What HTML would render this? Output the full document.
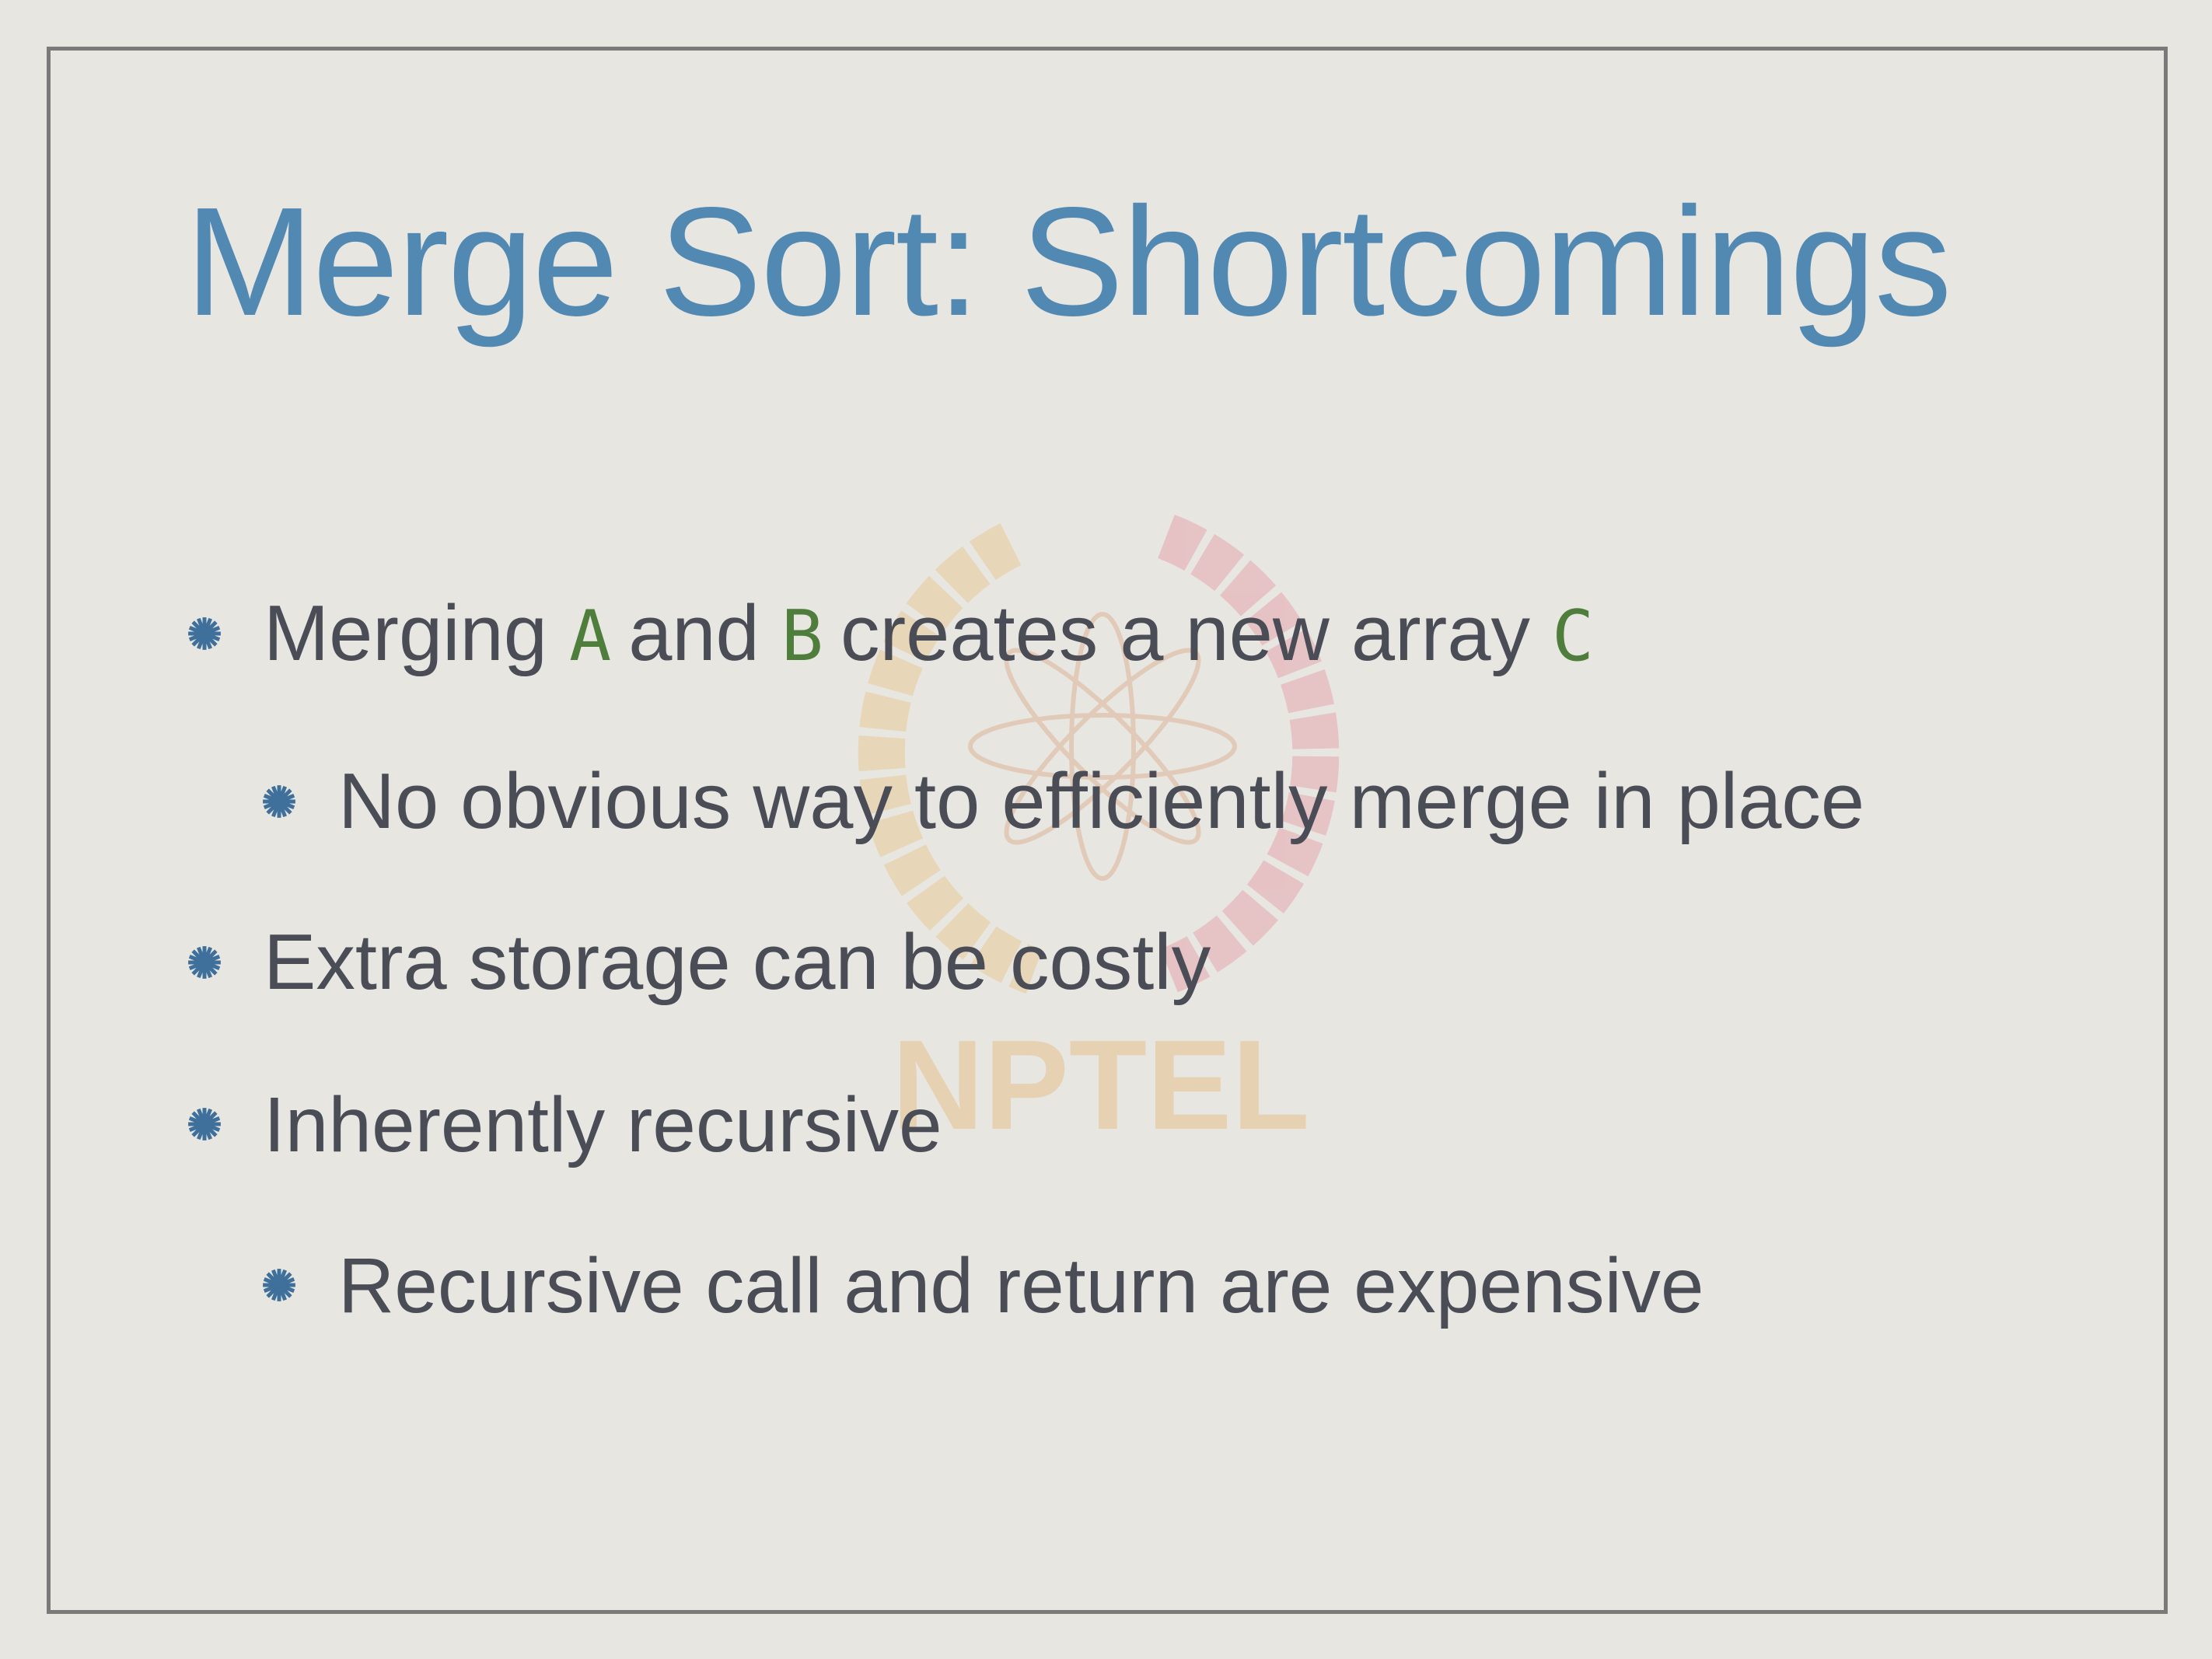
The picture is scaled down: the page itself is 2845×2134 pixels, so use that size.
<!DOCTYPE html>
<html><head><meta charset="utf-8"><style>
html,body{margin:0;padding:0;width:2845px;height:2134px;overflow:hidden}
body{background:#e7e6e1;position:relative;font-family:"Liberation Sans",Arial,sans-serif}
.border{position:absolute;left:60px;top:60px;width:2718px;height:2006px;border:5px solid #7a7a7a}
.t{position:absolute;white-space:nowrap;line-height:1}
.title{left:238px;top:238px;font-size:199px;color:#5289b3;letter-spacing:-1.7px}
.b{font-size:101px;color:#4a4d56}
.g{font-family:"DejaVu Sans Mono","Liberation Mono",monospace;color:#4e7d3c;font-size:90px;letter-spacing:-6px}
.g2{font-family:"DejaVu Sans Mono","Liberation Mono",monospace;color:#4e7d3c;font-size:90px}
svg.bul{position:absolute;width:44px;height:44px}
</style></head><body>
<div class="border"></div>
<svg style="position:absolute;left:0;top:0" width="2845" height="2134">
<g opacity="0.5" fill="none">
<path d="M1300 700 A300 300 0 0 0 1330 1250" stroke="#e8c890" stroke-width="60" stroke-dasharray="42 10"/>
<path d="M1500 690 A300 300 0 0 1 1500 1250" stroke="#e6a0a8" stroke-width="60" stroke-dasharray="42 10"/>
<g stroke="#dcb090" stroke-width="6">
<ellipse cx="1418" cy="960" rx="40" ry="170"/>
<ellipse cx="1418" cy="960" rx="40" ry="170" transform="rotate(45 1418 960)"/>
<ellipse cx="1418" cy="960" rx="40" ry="170" transform="rotate(90 1418 960)"/>
<ellipse cx="1418" cy="960" rx="40" ry="170" transform="rotate(135 1418 960)"/>
</g>
</g>
<text x="1147" y="1452" font-family="Liberation Sans" font-weight="bold" font-size="164" fill="#e6c9a0" opacity="0.7">NPTEL</text>
</svg>
<div class="t title">Merge Sort: Shortcomings</div>

<svg class="bul" style="left:241px;top:793px" viewBox="-20 -20 40 40"><g stroke="#3f6f9b" stroke-width="4.5"><line x1="0" y1="-19" x2="0" y2="19"/><line x1="-19" y1="0" x2="19" y2="0"/><line x1="-13.5" y1="-13.5" x2="13.5" y2="13.5"/><line x1="-13.5" y1="13.5" x2="13.5" y2="-13.5"/><line x1="-7" y1="-17.5" x2="7" y2="17.5"/><line x1="7" y1="-17.5" x2="-7" y2="17.5"/><line x1="-17.5" y1="-7" x2="17.5" y2="7"/><line x1="-17.5" y1="7" x2="17.5" y2="-7"/></g></svg>
<div class="t b" style="left:339px;top:765px">Merging <span class="g">A</span> and <span class="g">B</span> creates a new array <span class="g2">C</span></div>

<svg class="bul" style="left:337px;top:1009px" viewBox="-20 -20 40 40"><g stroke="#3f6f9b" stroke-width="4.5"><line x1="0" y1="-19" x2="0" y2="19"/><line x1="-19" y1="0" x2="19" y2="0"/><line x1="-13.5" y1="-13.5" x2="13.5" y2="13.5"/><line x1="-13.5" y1="13.5" x2="13.5" y2="-13.5"/><line x1="-7" y1="-17.5" x2="7" y2="17.5"/><line x1="7" y1="-17.5" x2="-7" y2="17.5"/><line x1="-17.5" y1="-7" x2="17.5" y2="7"/><line x1="-17.5" y1="7" x2="17.5" y2="-7"/></g></svg>
<div class="t b" style="left:435px;top:981px">No obvious way to efficiently merge in place</div>

<svg class="bul" style="left:241px;top:1216px" viewBox="-20 -20 40 40"><g stroke="#3f6f9b" stroke-width="4.5"><line x1="0" y1="-19" x2="0" y2="19"/><line x1="-19" y1="0" x2="19" y2="0"/><line x1="-13.5" y1="-13.5" x2="13.5" y2="13.5"/><line x1="-13.5" y1="13.5" x2="13.5" y2="-13.5"/><line x1="-7" y1="-17.5" x2="7" y2="17.5"/><line x1="7" y1="-17.5" x2="-7" y2="17.5"/><line x1="-17.5" y1="-7" x2="17.5" y2="7"/><line x1="-17.5" y1="7" x2="17.5" y2="-7"/></g></svg>
<div class="t b" style="left:339px;top:1188px">Extra storage can be costly</div>

<svg class="bul" style="left:241px;top:1424px" viewBox="-20 -20 40 40"><g stroke="#3f6f9b" stroke-width="4.5"><line x1="0" y1="-19" x2="0" y2="19"/><line x1="-19" y1="0" x2="19" y2="0"/><line x1="-13.5" y1="-13.5" x2="13.5" y2="13.5"/><line x1="-13.5" y1="13.5" x2="13.5" y2="-13.5"/><line x1="-7" y1="-17.5" x2="7" y2="17.5"/><line x1="7" y1="-17.5" x2="-7" y2="17.5"/><line x1="-17.5" y1="-7" x2="17.5" y2="7"/><line x1="-17.5" y1="7" x2="17.5" y2="-7"/></g></svg>
<div class="t b" style="left:339px;top:1397px;font-size:100px">Inherently recursive</div>

<svg class="bul" style="left:337px;top:1631px" viewBox="-20 -20 40 40"><g stroke="#3f6f9b" stroke-width="4.5"><line x1="0" y1="-19" x2="0" y2="19"/><line x1="-19" y1="0" x2="19" y2="0"/><line x1="-13.5" y1="-13.5" x2="13.5" y2="13.5"/><line x1="-13.5" y1="13.5" x2="13.5" y2="-13.5"/><line x1="-7" y1="-17.5" x2="7" y2="17.5"/><line x1="7" y1="-17.5" x2="-7" y2="17.5"/><line x1="-17.5" y1="-7" x2="17.5" y2="7"/><line x1="-17.5" y1="7" x2="17.5" y2="-7"/></g></svg>
<div class="t b" style="left:435px;top:1604px;font-size:100px">Recursive call and return are expensive</div>
</body></html>
